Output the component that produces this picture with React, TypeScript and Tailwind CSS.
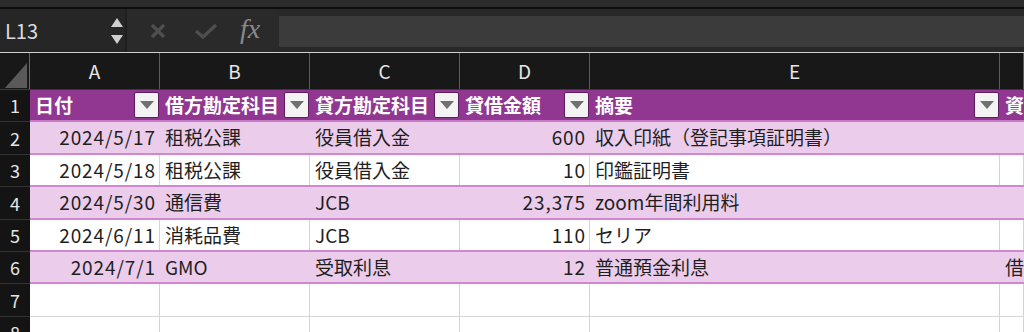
import React from "react";

const COLS = [130, 150, 150, 130, 410, 100];
const ROW_H = [32, 33, 32, 33, 32, 32, 33, 32];

type Cell = { t: string; r?: boolean };

const data: Cell[][] = [
  [{ t: "2024/5/17", r: true }, { t: "租税公課" }, { t: "役員借入金" }, { t: "600", r: true }, { t: "収入印紙（登記事項証明書）" }, { t: "" }],
  [{ t: "2024/5/18", r: true }, { t: "租税公課" }, { t: "役員借入金" }, { t: "10", r: true }, { t: "印鑑証明書" }, { t: "" }],
  [{ t: "2024/5/30", r: true }, { t: "通信費" }, { t: "JCB" }, { t: "23,375", r: true }, { t: "zoom年間利用料" }, { t: "" }],
  [{ t: "2024/6/11", r: true }, { t: "消耗品費" }, { t: "JCB" }, { t: "110", r: true }, { t: "セリア" }, { t: "" }],
  [{ t: "2024/7/1", r: true }, { t: "GMO" }, { t: "受取利息" }, { t: "12", r: true }, { t: "普通預金利息" }, { t: "借" }],
  [{ t: "" }, { t: "" }, { t: "" }, { t: "" }, { t: "" }, { t: "" }],
  [{ t: "" }, { t: "" }, { t: "" }, { t: "" }, { t: "" }, { t: "" }],
];

const headers = ["日付", "借方勘定科目", "貸方勘定科目", "貸借金額", "摘要", "資"];

function FilterBtn() {
  return (
    <div className="w-[25px] h-[26px] shrink-0 bg-[#f3f3f3] border border-[#5b1d5c] rounded-[2px] flex items-center justify-center">
      <svg width="14" height="8" viewBox="0 0 14 8">
        <polygon points="0,0 14,0 7,8" fill="#707070" />
      </svg>
    </div>
  );
}

function RowNum({ n, h, border }: { n: number; h: number; border: string }) {
  return (
    <div
      className={`w-[30px] shrink-0 bg-[#141414] text-[#e6e6e6] text-[18px] flex items-center justify-center border-b ${border}`}
      style={{ height: h }}
    >
      {n}
    </div>
  );
}

export default function App() {
  return (
    <div
      className="w-[1024px] h-[332px] overflow-hidden bg-[#1b1b1b]"
      style={{ fontFamily: "'Noto Sans CJK JP', 'Noto Sans', sans-serif" }}
    >
      {/* top band */}
      <div className="h-[7px] bg-[#2c2c2c]" />
      <div className="h-[2px] bg-[#0d0d0d]" />
      {/* formula bar */}
      <div className="h-[43px] flex bg-[#282828]">
        <div className="w-[125px] shrink-0 bg-[#262626] flex items-center pl-[5px] pr-[2px] relative">
          <span className="text-[20px] text-[#dcdcdc] leading-none">L13</span>
          <div className="ml-auto flex flex-col gap-[8px] mt-[1px]">
            <svg width="12" height="9" viewBox="0 0 12 9">
              <polygon points="6,0 12,9 0,9" fill="#cfcfcf" />
            </svg>
            <svg width="12" height="9" viewBox="0 0 12 9">
              <polygon points="0,0 12,0 6,9" fill="#cfcfcf" />
            </svg>
          </div>
        </div>
        <div className="w-[2px] bg-[#1f1f1f]" />
        <div className="w-[152px] shrink-0 bg-[#2a2a2a] flex items-center">
          <svg className="ml-[23px]" width="16" height="16" viewBox="0 0 16 16">
            <path d="M2 2 L14 14 M14 2 L2 14" stroke="#4f4f4f" strokeWidth="3.2" strokeLinecap="butt" />
          </svg>
          <svg className="ml-[28px]" width="24" height="16" viewBox="0 0 24 16">
            <path d="M2 8 L9 14 L22 2" stroke="#4f4f4f" strokeWidth="3.2" fill="none" />
          </svg>
          <span
            className="ml-[22px] text-[28px] italic text-[#8a8a8a] leading-none -mt-[3px]"
            style={{ fontFamily: "'Liberation Serif', 'DejaVu Serif', serif" }}
          >
            fx
          </span>
        </div>
        <div className="flex-1 mt-[7px] h-[31px] bg-[#3b3b3b]" />
      </div>
      <div className="h-[1px] bg-[#cfcfcf]" />
      {/* column headers */}
      <div className="h-[37px] flex bg-[#181818] border-b border-[#3a3a3a]">
        <div className="w-[30px] shrink-0 border-r border-[#666] relative">
          <svg className="absolute left-[5px] top-[10px]" width="22" height="25" viewBox="0 0 22 25">
            <polygon points="22,0 22,25 0,25" fill="#5a5a5a" />
          </svg>
        </div>
        {["A", "B", "C", "D", "E", ""].map((l, i) => (
          <div
            key={i}
            className={`shrink-0 border-r border-[#5c5c5c] flex items-center justify-center text-[19px] text-[#e6e6e6] ${i === 5 ? "flex-1" : ""}`}
            style={i === 5 ? {} : { width: COLS[i] }}
          >
            {l}
          </div>
        ))}
      </div>
      {/* header row 1 */}
      <div className="flex">
        <RowNum n={1} h={ROW_H[0]} border="border-[#333]" />
        <div className="flex flex-1 bg-[#913691] border-b-2 border-[#c77ac7]" style={{ height: ROW_H[0] }}>
          {headers.map((h, i) => (
            <div
              key={i}
              className={`shrink-0 flex items-center pl-[5px] pr-[1px] text-white font-bold text-[19px] ${i === 5 ? "flex-1" : ""}`}
              style={i === 5 ? {} : { width: COLS[i] }}
            >
              <span className="whitespace-nowrap">{h}</span>
              {i < 5 && (
                <div className="ml-auto">
                  <FilterBtn />
                </div>
              )}
            </div>
          ))}
        </div>
      </div>
      {/* data rows */}
      {data.map((row, ri) => {
        const purple = ri % 2 === 0 && ri < 5;
        const inTable = ri < 5;
        const bottom = inTable ? "border-[#d186d1]" : "border-[#d6d6d6]";
        const h = ROW_H[ri + 1];
        return (
          <div key={ri} className="flex">
            <RowNum n={ri + 2} h={h} border="border-[#333]" />
            <div
              className={`flex flex-1 ${inTable ? "border-b-2" : "border-b"} ${bottom} ${purple ? "bg-[#ebcdeb]" : "bg-white"}`}
              style={{ height: h }}
            >
              {row.map((c, ci) => (
                <div
                  key={ci}
                  className={`shrink-0 flex items-center border-r ${purple ? "border-[#ebcdeb]" : "border-[#d4d4d4]"} text-[19px] text-[#1f1f1f] whitespace-nowrap overflow-hidden ${c.r ? "justify-end pr-[3px] tracking-[0.9px]" : "pl-[5px]"} ${ci === 5 ? "flex-1" : ""}`}
                  style={ci === 5 ? {} : { width: COLS[ci] }}
                >
                  {c.t}
                </div>
              ))}
            </div>
          </div>
        );
      })}
    </div>
  );
}
